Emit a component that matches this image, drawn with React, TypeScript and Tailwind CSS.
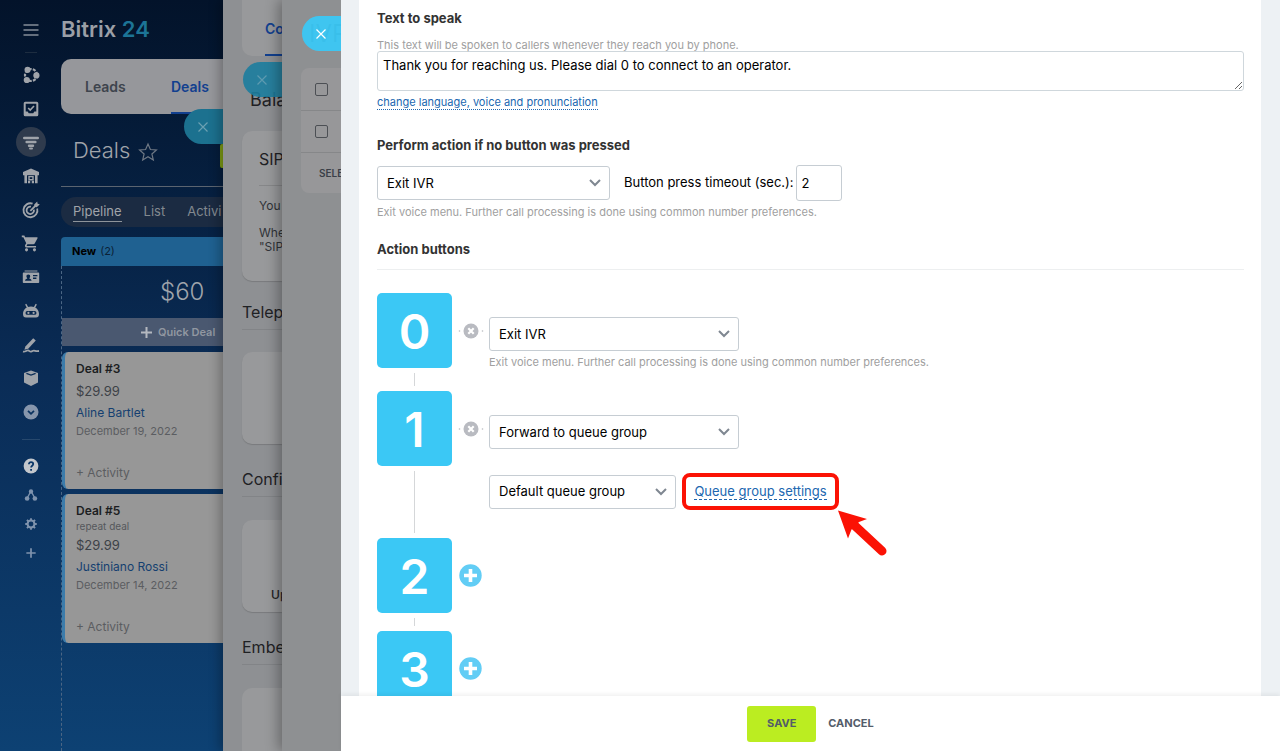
import type { ReactNode } from 'react';
import { MdShoppingCart } from 'react-icons/md';

function Icon({ children, size = 18 }: { children: ReactNode; size?: number }) {
  return (
    <svg width={size} height={size} viewBox="0 0 18 18" fill="none" stroke="currentColor" strokeWidth="1.6">
      {children}
    </svg>
  );
}

const mainMenu = [
  {
    label: 'Collaboration',
    icon: (
      <Icon>
        <circle cx="9" cy="9" r="6" strokeWidth="2.2" strokeDasharray="3 1.2" />
        <g fill="currentColor" stroke="none">
          <circle cx="5.6" cy="3.8" r="3.1" />
          <circle cx="14.4" cy="9.4" r="3.1" />
          <circle cx="4.8" cy="14" r="3.1" />
        </g>
      </Icon>
    ),
  },
  {
    label: 'Tasks',
    icon: (
      <Icon>
        <rect x="2.7" y="2.7" width="12.6" height="12.6" rx="0.6" strokeWidth="2" />
        <path d="M3 11.4h2.6l1.2 1.8h4.4l1.2-1.8H15v4H3z" fill="currentColor" stroke="none" />
        <path d="m6.2 8 2 2 3.8-4" />
      </Icon>
    ),
  },
  {
    label: 'CRM',
    active: true,
    icon: (
      <Icon>
        <path d="M2.2 5h13.600M4.600 9h8.800M7 12.800h4" strokeWidth="2.4" strokeLinecap="round" />
        <path d="M8 15.400h2" strokeWidth="2" strokeLinecap="round" />
      </Icon>
    ),
  },
  {
    label: 'Inventory',
    icon: (
      <Icon>
        <path
          fillRule="evenodd"
          d="M9 1.400 17 5v3.200h-1.400v8H2.400v-8H1V5zM5 8.200v8h8v-8z"
          fill="currentColor"
          stroke="none"
        />
        <path d="M7 9.600h4v3.200H7z" strokeWidth="1.400" />
        <path d="M6 13.800h2.200v2.400H6zM9.800 13.800H12v2.400H9.800z" fill="currentColor" stroke="none" />
      </Icon>
    ),
  },
  {
    label: 'Marketing',
    icon: (
      <Icon>
        <path d="M15.2 7.4A7 7 0 1 1 10.6 2.6" strokeWidth="1.8" />
        <path d="M11.9 8.6A3.7 3.7 0 1 1 9 5.7" strokeWidth="1.8" />
        <path d="m8.4 9.8 5.8-5.8" strokeWidth="1.8" />
        <path d="m12.2 3.6 3-3 .4 2.2 2.2.4-3 3-2.2-.4z" fill="currentColor" stroke="none" />
      </Icon>
    ),
  },
  { label: 'Sites and stores', icon: <MdShoppingCart size={19} /> },
  {
    label: 'Contact center',
    icon: (
      <Icon>
        <path
          fillRule="evenodd"
          d="M2.6 2.4h12.8v1.2H2.6zM1.6 4.6h14.8a.8.8 0 0 1 .8.8v8.8a.8.8 0 0 1-.8.8H1.6a.8.8 0 0 1-.8-.8V5.400a.8.8 0 0 1 .8-.8zM6.300 6.400a1.900 1.900 0 0 0-1.900 2.200c.1.900.5 1.400.9 1.700-.1.700-2.300.8-2.300 2.400h6.600c0-1.600-2.200-1.700-2.300-2.400.4-.3.8-.8.9-1.700a1.900 1.900 0 0 0-1.900-2.200zM11 7v1.300h4.400V7zM11 9.600v1.300h3.400V9.600z"
          fill="currentColor"
          stroke="none"
        />
      </Icon>
    ),
  },
  {
    label: 'Robots',
    icon: (
      <Icon>
        <path d="m4 2.600 1.600 3M14 2.600l-1.600 3" strokeWidth="1.400" strokeLinecap="round" />
        <path
          fillRule="evenodd"
          d="M9 4.400c4.600 0 8 2.900 8 7.600 0 2.300-1 3.600-3 3.600H4c-2 0-3-1.300-3-3.600 0-4.700 3.400-7.600 8-7.600zM5.400 9a1.900 1.900 0 0 0 0 3.800h7.200a1.900 1.900 0 0 0 0-3.800z"
          fill="currentColor"
          stroke="none"
        />
        <circle cx="6.400" cy="10.900" r="1.100" fill="currentColor" stroke="none" />
        <circle cx="11.600" cy="10.900" r="1.100" fill="currentColor" stroke="none" />
      </Icon>
    ),
  },
  {
    label: 'Sign',
    icon: (
      <Icon>
        <path d="m3.400 10.400 7.800-8.200 2.600 2.400-7.600 8.200-3.800 1z" fill="currentColor" stroke="none" />
        <path d="M1 15.600c2.400.6 3.400-1.400 5-1.200s1.400 1.400 3 1.200 1.600-1.200 3-1 2 .8 5 .4" strokeWidth="1.800" />
      </Icon>
    ),
  },
  {
    label: 'Market',
    icon: (
      <Icon>
        <path d="M9 1.600 16 4v9.600L9 17l-7-3.400V4z" fill="currentColor" stroke="none" />
        <path d="M4.400 4.400 9 6l4.600-1.600" stroke="#0a2c56" strokeWidth="1.200" />
      </Icon>
    ),
  },
  {
    label: 'More',
    dim: true,
    icon: (
      <Icon>
        <circle cx="9" cy="9" r="7.500" fill="currentColor" stroke="none" />
        <path d="m6 7.800 3 3 3-3" stroke="#0b3360" strokeWidth="1.800" />
      </Icon>
    ),
  },
];

const bottomMenu = [
  {
    label: 'Help',
    icon: (
      <Icon>
        <circle cx="9" cy="9" r="7.400" fill="#c3c7cc" stroke="none" />
        <path d="M6.900 7.300c0-3 4.300-2.700 4.300-.2 0 1.600-2.100 1.700-2.100 3.400M9.100 12v1.700" stroke="#0b3768" strokeWidth="1.800" />
      </Icon>
    ),
  },
  {
    label: 'Sitemap',
    icon: (
      <Icon size={14}>
        <path d="M9 4 4 13M9 4l5 9" />
        <g fill="currentColor" stroke="none">
          <circle cx="9" cy="4.500" r="2.800" />
          <circle cx="4" cy="13.500" r="3" />
          <circle cx="14" cy="13.500" r="3" />
        </g>
      </Icon>
    ),
  },
  {
    label: 'Settings',
    icon: (
      <Icon size={14}>
        <circle cx="9" cy="9" r="4.400" strokeWidth="2.600" />
        <path
          d="M9 1.600v3M9 13.400v3M1.600 9h3M13.400 9h3M3.800 3.800l2 2M12.200 12.200l2 2M14.200 3.800l-2 2M5.800 12.200l-2 2"
          strokeWidth="2.400"
        />
      </Icon>
    ),
  },
  {
    label: 'Add',
    icon: (
      <Icon size={14}>
        <path d="M9 3v12M3 9h12" strokeWidth="2.200" />
      </Icon>
    ),
  },
];

function Sidebar() {
  return (
    <nav className="flex w-[61px] shrink-0 flex-col items-center pt-[13px] text-[#a0a4aa]">
      <button aria-label="Menu" className="flex h-[34px] items-center text-[#858d98]">
        <Icon>
          <path d="M1.500 4h15M1.500 9h15M1.500 14h15" strokeWidth="1.500" />
        </Icon>
      </button>
      <div className="mt-[5px] mb-[5px] h-px w-3 bg-[#1d2d40]" />
      <div className="grid h-[371px] auto-rows-fr">
        {mainMenu.map((item) => (
          <a key={item.label} href="#" aria-label={item.label} className="flex items-center justify-center">
            <span
              className={
                item.active
                  ? 'flex size-[30px] items-center justify-center rounded-full bg-[#2f3b4d]'
                  : item.dim
                    ? 'text-[#8796ac]'
                    : ''
              }
            >
              {item.icon}
            </span>
          </a>
        ))}
      </div>
      <div className="mt-[10px] mb-3 h-px w-[18px] bg-[#27486d]" />
      <div className="grid h-[115px] auto-rows-fr text-[#7f93ad]">
        {bottomMenu.map((item) => (
          <a key={item.label} href="#" aria-label={item.label} className="flex items-center justify-center">
            {item.icon}
          </a>
        ))}
      </div>
    </nav>
  );
}

function CloseTab({ className }: { className: string }) {
  return (
    <button
      aria-label="Close"
      className={`absolute right-0 flex h-[35px] w-[39px] items-center justify-center rounded-l-full pr-[2px] ${className}`}
    >
      <svg width="12" height="12" viewBox="0 0 12 12" stroke="currentColor" strokeWidth="1.200">
        <path d="m1.500 1.500 9 9M10.500 1.500l-9 9" />
      </svg>
    </button>
  );
}

const deals = [
  { title: 'Deal #3', amount: '$29.99', client: 'Aline Bartlet', date: 'December 19, 2022' },
  { title: 'Deal #5', repeat: 'repeat deal', amount: '$29.99', client: 'Justiniano Rossi', date: 'December 14, 2022' },
];

function DealsPage() {
  return (
    <section className="relative flex w-[162px] shrink-0 flex-col overflow-hidden whitespace-nowrap">
      <div className="flex h-[59px] items-center text-[22px] font-semibold text-[#9b9fa6]">
        <span>
          Bitrix <span className="text-[#1c7496]">24</span>
        </span>
      </div>
      <div className="flex h-[55px] shrink-0 rounded-l-[10px] bg-[#96979b] pl-6 text-sm font-semibold">
        <a href="#" className="flex w-[86px] items-center text-[#3e444d]">
          Leads
        </a>
        <a href="#" className="flex flex-1 items-center border-b-2 border-[#12408f] pt-[2px] text-[#12408f]">
          Deals
        </a>
      </div>
      <div className="flex h-[73px] shrink-0 items-center justify-between border-b border-[#5b6470] pl-3">
        <h1 className="flex items-center gap-2 text-[22px] font-light text-[#a0a4aa]">
          Deals
          <svg className="mt-1" width="20" height="20" viewBox="0 0 20 20" fill="none" stroke="#6f7884" strokeWidth="1.200">
            <path d="m10 2 2.400 5.500 6 .5-4.500 4 1.400 5.900L10 14.800l-5.300 3.100L6.100 12 1.600 8l6-.5z" />
          </svg>
        </h1>
        <button aria-label="Create" className="mt-3 h-6 w-[3px] rounded-l-xs bg-[#7d9c14]" />
      </div>
      <div className="mt-[10px] flex h-[30px] shrink-0 items-center gap-[22px] rounded-l-full bg-[#1b2b42] pl-3 text-[13px] text-[#82898f]">
        <a href="#" className="border-b border-[#8e949b] text-[#a0a4a9]">
          Pipeline
        </a>
        <a href="#">List</a>
        <a href="#">Activi</a>
      </div>
      <div className="mt-[10px] flex h-[29px] shrink-0 items-center gap-1 rounded-tl bg-[#1f6191] pl-[11px] text-[11px] text-[#0b2137]">
        <b className="font-bold text-black">New</b> (2)
      </div>
      <div className="flex-1 border-l border-dashed border-[#4b6684]">
        <div className="flex h-[52px] items-center pl-[98px] text-2xl font-light text-[#9fa4ab]">$60</div>
        <button className="flex h-[28px] w-full items-center gap-[6px] bg-[#4a5870] pl-[79px] text-[11px] font-semibold text-[#9197a1]">
          <svg width="11" height="11" viewBox="0 0 11 11" stroke="#b4b8bf" strokeWidth="2">
            <path d="M5.500 0v11M0 5.500h11" />
          </svg>
          Quick Deal
        </button>
        <div className="flex flex-col gap-[5px] pt-[6px]">
          {deals.map((deal) => (
            <article
              key={deal.title}
              className="rounded-l-md border-l-[3px] border-[#3c7cab] bg-[#979797] pt-2 pb-2 pl-[11px] text-[13px] leading-5 text-[#3d4147]"
            >
              <h2 className="text-xs leading-[18px] font-semibold text-[#1c1e22]">{deal.title}</h2>
              {deal.repeat && <p className="text-[10px] leading-3 text-[#55585c]">{deal.repeat}</p>}
              <p className="mt-[3px]">{deal.amount}</p>
              <a href="#" className="mt-[2px] block text-xs leading-5 text-[#153f70]">
                {deal.client}
              </a>
              <p className="text-[11px] leading-4 text-[#5b5d61]">{deal.date}</p>
              <button className="mt-[26px] block text-xs leading-4 text-[#5b5d61]">+ Activity</button>
            </article>
          ))}
        </div>
      </div>
      <CloseTab className="top-[109px] bg-[#1c718f] text-[#6ba0b2]" />
    </section>
  );
}

function SectionTitle({ children }: { children: ReactNode }) {
  return (
    <h2 className="flex h-9 shrink-0 items-center border-b border-[#828487] text-base text-[#1f2124]">{children}</h2>
  );
}

function TelephonySlider() {
  return (
    <section className="relative flex w-[59px] shrink-0 flex-col overflow-hidden bg-[#8e9093] pl-[19px] whitespace-nowrap shadow-[-4px_0_10px_rgba(0,0,0,0.25)]">
      <div className="flex h-14 shrink-0 rounded-bl-[10px] bg-[#98999b] pl-[23px] text-sm font-semibold text-[#12408f]">
        <a href="#" className="flex flex-1 items-center border-b-2 border-[#12408f] pt-1">
          Co
        </a>
      </div>
      <h2 className="mt-[30px] h-[45px] shrink-0 pl-2 text-lg text-[#1f2124]">Bala</h2>
      <div className="h-[150px] shrink-0 rounded-l-[10px] bg-[#98999b] pl-[17px] text-xs text-[#303338] shadow-[0_1px_1px_rgba(0,0,0,0.15)]">
        <h3 className="flex h-[55px] items-center border-b border-[#868789] pt-[2px] text-base text-[#1f2124]">SIP</h3>
        <p className="mt-3">You</p>
        <p className="mt-3 leading-[14px]">
          Whe
          <br />
          "SIP
        </p>
      </div>
      <div className="mt-[13px] flex shrink-0 flex-col">
        <SectionTitle>Telep</SectionTitle>
        <div className="mt-[22px] h-[92px] rounded-l-[10px] bg-[#98999b] shadow-[0_1px_1px_rgba(0,0,0,0.15)]" />
      </div>
      <div className="mt-[17px] flex shrink-0 flex-col">
        <SectionTitle>Confi</SectionTitle>
        <div className="mt-[23px] flex h-[92px] items-end rounded-l-[10px] bg-[#98999b] pb-[9px] pl-[29px] text-xs font-medium text-[#1f2124] shadow-[0_1px_1px_rgba(0,0,0,0.15)]">
          Up
        </div>
      </div>
      <div className="mt-[17px] flex shrink-0 flex-col">
        <SectionTitle>Embe</SectionTitle>
        <div className="mt-[23px] h-[92px] rounded-l-[10px] bg-[#98999b]" />
      </div>
      <CloseTab className="top-[62px] bg-[#1c7d9e]/90 text-[#5d9bb0]" />
    </section>
  );
}

function IvrListSlider() {
  return (
    <section className="relative flex w-[59px] shrink-0 flex-col overflow-hidden bg-[#8e9092] pl-[19px] whitespace-nowrap shadow-[-4px_0_12px_rgba(0,0,0,0.3)]">
      <h2 className="flex h-[68px] shrink-0 items-center pl-2 text-2xl text-[#1f2124]">IVR</h2>
      <div className="rounded-l-lg bg-[#979799]">
        <div className="flex h-[43px] items-center border-b border-[#868789] pl-[14px]">
          <input
            type="checkbox"
            aria-label="Select all"
            className="size-[13px] appearance-none rounded-xs border border-[#4c4f54]"
          />
        </div>
        <div className="flex h-[42px] items-center border-b border-[#868789] pl-[14px]">
          <input
            type="checkbox"
            aria-label="Select row"
            className="size-[13px] appearance-none rounded-xs border border-[#4c4f54]"
          />
        </div>
        <div className="flex h-10 items-center pl-[18px] text-[10px] font-semibold text-[#3a3f48]">SELE</div>
      </div>
      <CloseTab className="top-[16px] bg-[#3bc8f5]/95 text-white" />
    </section>
  );
}

function Select({ id, label, value, className }: { id: string; label: string; value: string; className: string }) {
  return (
    <div className={`relative h-[34px] ${className}`}>
      <select
        id={id}
        aria-label={label}
        defaultValue={value}
        className="h-full w-full appearance-none rounded-[3px] border border-[#c6cdd3] bg-white pt-[1px] pr-8 pl-[9px] text-[13px] text-black"
      >
        <option>{value}</option>
      </select>
      <svg
        className="pointer-events-none absolute top-[13px] right-[9px]"
        width="12"
        height="8"
        viewBox="0 0 12 8"
        fill="none"
        stroke="#7f8791"
        strokeWidth="2"
      >
        <path d="m1 1 5 5 5-5" />
      </svg>
    </div>
  );
}

function KeyRow({ digit, assigned, children }: { digit: string; assigned?: boolean; children?: ReactNode }) {
  return (
    <div className="flex">
      <div className="flex w-[75px] shrink-0 flex-col items-center">
        <div className="flex h-[75px] w-full shrink-0 items-center justify-center rounded-[5px] bg-[#3bc8f5] pt-[2px] text-5xl font-semibold text-white">
          {digit}
        </div>
        <div className={`my-[5px] w-px flex-1 bg-[#d5d7d9] ${assigned ? '' : 'min-h-[8px]'}`} />
      </div>
      <div className="flex h-[75px] w-[37px] shrink-0 items-center justify-center">
        {assigned ? (
          <button aria-label={`Remove action ${digit}`}>
            <svg width="26" height="16" viewBox="0 0 26 16">
              <circle cx="13" cy="8" r="7.500" fill="#b9bbc1" />
              <path d="m10.300 5.300 5.400 5.400M15.700 5.300l-5.400 5.400" stroke="#fff" strokeWidth="2.200" />
              <circle cx="1.500" cy="8" r="0.800" fill="#b9bbc1" />
              <circle cx="24.500" cy="8" r="0.800" fill="#b9bbc1" />
            </svg>
          </button>
        ) : (
          <button aria-label={`Add action ${digit}`}>
            <svg width="23" height="23" viewBox="0 0 23 23">
              <circle cx="11.500" cy="11.500" r="11.200" fill="#62cdf5" />
              <path d="M11.500 5v13M5 11.500h13" stroke="#fff" strokeWidth="3.600" />
            </svg>
          </button>
        )}
      </div>
      {children}
    </div>
  );
}

function IvrForm() {
  return (
    <main className="relative flex min-w-0 flex-1 flex-col bg-[#edf1f4]">
      <div className="min-h-0 flex-1 overflow-hidden pr-[19px] pl-[18px]">
        <div className="min-h-full bg-white pt-2 pr-[17px] pl-[18px]">
          <h2 className="text-[13px] leading-5 font-bold text-[#333]">Text to speak</h2>
          <label htmlFor="speech" className="mt-[11px] block text-[11px] leading-3 text-[#a0a0a0]">
            This text will be spoken to callers whenever they reach you by phone.
          </label>
          <textarea
            id="speech"
            className="block h-10 w-full rounded-[3px] border border-[#cfd7dc] px-[5px] pt-[3px] text-[13px] leading-5 text-black"
            defaultValue="Thank you for reaching us. Please dial 0 to connect to an operator."
          />
          <a
            href="#"
            className="mt-1 block w-fit border-b border-dotted border-[#2067b0] text-[11px] leading-[14px] text-[#2067b0]"
          >
            change language, voice and pronunciation
          </a>

          <h2 className="mt-[25px] text-[13px] leading-5 font-bold text-[#333]">
            Perform action if no button was pressed
          </h2>
          <div className="mt-[10px] flex items-center gap-[14px]">
            <Select id="no-press" label="Action if no button was pressed" value="Exit IVR" className="w-[233px]" />
            <div className="flex items-center gap-[2px] text-[13px] text-black">
              <label htmlFor="timeout">Button press timeout (sec.):</label>
              <input
                id="timeout"
                defaultValue="2"
                className="h-9 w-[46px] rounded-[3px] border border-[#c6cdd3] px-[5px]"
              />
            </div>
          </div>
          <p className="mt-[3px] text-[11px] leading-4 text-[#a0a0a0]">
            Exit voice menu. Further call processing is done using common number preferences.
          </p>

          <h2 className="mt-[19px] border-b border-[#edeff0] pb-[10px] text-[13px] leading-5 font-bold text-[#333]">
            Action buttons
          </h2>
          <div className="pt-[23px]">
            <KeyRow digit="0" assigned>
              <div className="pt-6 pb-[21px]">
                <Select id="key-0" label="Action for button 0" value="Exit IVR" className="w-[250px]" />
                <p className="mt-[3px] text-[11px] leading-4 text-[#a0a0a0]">
                  Exit voice menu. Further call processing is done using common number preferences.
                </p>
              </div>
            </KeyRow>
            <KeyRow digit="1" assigned>
              <div className="pt-6 pb-7">
                <Select id="key-1" label="Action for button 1" value="Forward to queue group" className="w-[250px]" />
                <div className="mt-6 flex items-center gap-[6px]">
                  <Select id="queue" label="Queue group" value="Default queue group" className="w-[187px]" />
                  <div className="relative flex h-[37px] w-[157px] items-center justify-center rounded-lg border-4 border-[#fb1205]">
                    <a
                      href="#"
                      className="border-b border-dashed border-[#2067b0] text-[13px] leading-4 text-[#2067b0]"
                    >
                      Queue group settings
                    </a>
                    <svg className="absolute top-full left-full" width="52" height="50" viewBox="0 0 52 50">
                      <path d="M3 4.500 32 13l-8 3-7.500 7.500-3.500 9z" fill="#fb1205" />
                      <path d="m18 18 29 27" stroke="#fb1205" strokeWidth="9" strokeLinecap="round" />
                    </svg>
                  </div>
                </div>
              </div>
            </KeyRow>
            <KeyRow digit="2" />
            <KeyRow digit="3" />
          </div>
        </div>
      </div>
      <footer className="relative flex h-[55px] shrink-0 items-center justify-center gap-3 bg-white text-[11px] font-bold text-[#535c69] shadow-[0_-2px_4px_rgba(0,0,0,0.06)]">
        <button className="h-9 w-[69px] rounded-[3px] bg-[#bbed21]">SAVE</button>
        <button>CANCEL</button>
      </footer>
    </main>
  );
}

export default function App() {
  return (
    <div className="flex h-screen overflow-hidden bg-linear-to-b from-[#03132a] via-[#0a2c56] to-[#0d4173] font-['Inter',sans-serif]">
      <Sidebar />
      <DealsPage />
      <TelephonySlider />
      <IvrListSlider />
      <IvrForm />
    </div>
  );
}
